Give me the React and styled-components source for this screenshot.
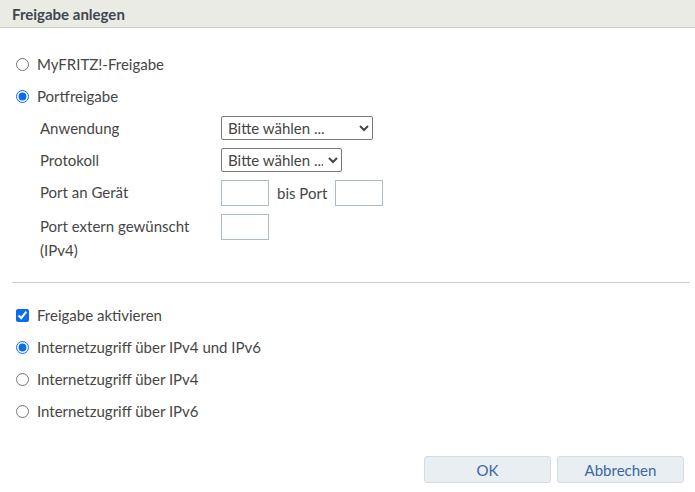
import React from 'react';
import styled, { createGlobalStyle } from 'styled-components';

const GlobalStyle = createGlobalStyle`
  html, body {
    margin: 0;
    padding: 0;
    background: #fff;
  }
  body {
    font-family: Lato, "Liberation Sans", sans-serif;
    font-size: 15px;
    color: #464646;
  }
`;

const Dialog = styled.div`
  width: 695px;
  height: 492px;
  display: flex;
  flex-direction: column;
`;

const Header = styled.div`
  height: 27px;
  background: #ebebe6;
  border-bottom: 1px solid #cfcfcb;
  padding-left: 12px;
  display: flex;
  align-items: center;
  font-weight: bold;
  color: #3f4650;
`;

const Body = styled.div`
  flex: 1;
  padding: 20px 5px 0 12px;
  display: flex;
  flex-direction: column;
`;

const Option = styled.label`
  display: flex;
  align-items: center;
  height: 32px;
  padding-left: 4px;
  gap: 8px;

  input {
    margin: 0;
    width: 13px;
    height: 13px;
    accent-color: #0b6bf1;
  }
`;

const Fields = styled.div`
  display: grid;
  grid-template-columns: 181px 1fr;
  row-gap: 8px;
  padding: 4px 0 0 28px;
  align-items: start;
`;

const Label = styled.div`
  line-height: 24px;
`;

const Control = styled.div`
  display: flex;
  align-items: center;
  gap: 8px;
`;

const Select = styled.select`
  width: ${p => p.$w}px;
  height: 24px;
  font: inherit;
  color: #464646;
  border: 1px solid #767676;
  border-radius: 2px;
  background: #fff;
  padding: 0 2px;
`;

const TextBox = styled.input`
  width: 48px;
  height: 26px;
  box-sizing: border-box;
  border: 1px solid #a9bcc8;
  margin: 0;
`;

const Divider = styled.hr`
  border: 0;
  border-top: 1px solid #d0d0d0;
  margin: 20px 0 16px;
`;

const Footer = styled.div`
  display: flex;
  justify-content: flex-end;
  gap: 6px;
  padding: 0 11px 9px 0;
`;

const Button = styled.button`
  width: 127px;
  height: 27px;
  font: inherit;
  color: #3b66a3;
  background: #e9eef3;
  border: 1px solid #d3dbe3;
  border-radius: 3px;
`;

export default function App() {
  return (
    <>
      <GlobalStyle />
      <Dialog>
        <Header>Freigabe anlegen</Header>
        <Body>
          <Option>
            <input type="radio" name="art" />
            MyFRITZ!-Freigabe
          </Option>
          <Option>
            <input type="radio" name="art" defaultChecked />
            Portfreigabe
          </Option>
          <Fields>
            <Label>Anwendung</Label>
            <Control>
              <Select $w={152}>
                <option>Bitte wählen ...</option>
              </Select>
            </Control>
            <Label>Protokoll</Label>
            <Control>
              <Select $w={121}>
                <option>Bitte wählen ...</option>
              </Select>
            </Control>
            <Label>Port an Gerät</Label>
            <Control>
              <TextBox />
              bis Port
              <TextBox />
            </Control>
            <Label>
              Port extern gewünscht
              <br />
              (IPv4)
            </Label>
            <Control>
              <TextBox />
            </Control>
          </Fields>
          <Divider />
          <Option>
            <input type="checkbox" defaultChecked />
            Freigabe aktivieren
          </Option>
          <Option>
            <input type="radio" name="ip" defaultChecked />
            Internetzugriff über IPv4 und IPv6
          </Option>
          <Option>
            <input type="radio" name="ip" />
            Internetzugriff über IPv4
          </Option>
          <Option>
            <input type="radio" name="ip" />
            Internetzugriff über IPv6
          </Option>
        </Body>
        <Footer>
          <Button>OK</Button>
          <Button>Abbrechen</Button>
        </Footer>
      </Dialog>
    </>
  );
}
